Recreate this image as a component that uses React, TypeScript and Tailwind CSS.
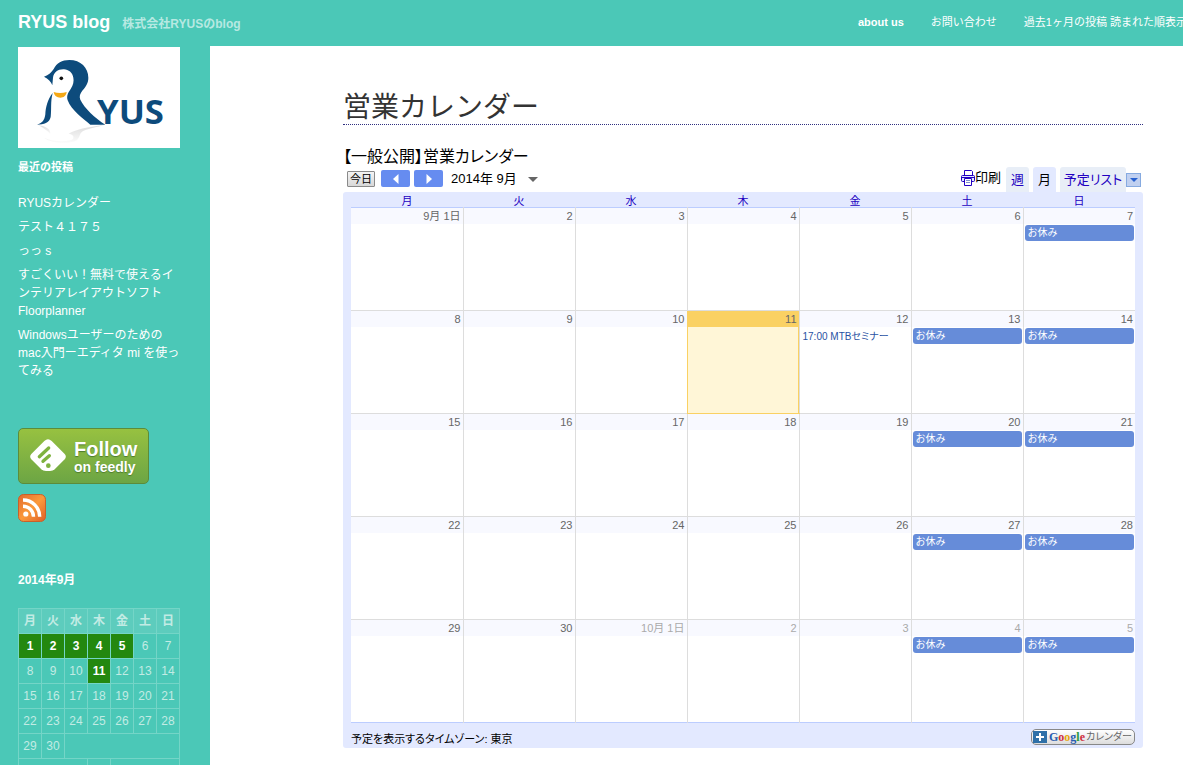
import clsx from 'clsx'

const navLinks = [
  { label: 'about us', bold: true },
  { label: 'お問い合わせ', bold: false },
  { label: '過去1ヶ月の投稿 読まれた順表示', bold: false },
]

const recentPosts = [
  'RYUSカレンダー',
  'テスト４１７５',
  'っっ s',
  'すごくいい！無料で使えるインテリアレイアウトソフト Floorplanner',
  'Windowsユーザーのための mac入門ーエディタ mi を使ってみる',
]

const weekdays = ['月', '火', '水', '木', '金', '土', '日']

const miniWeeks = [
  [1, 2, 3, 4, 5, 6, 7],
  [8, 9, 10, 11, 12, 13, 14],
  [15, 16, 17, 18, 19, 20, 21],
  [22, 23, 24, 25, 26, 27, 28],
]
const postedDays = [1, 2, 3, 4, 5, 11]

type Day = { label: string; holiday?: boolean; today?: boolean; other?: boolean; time?: string; title?: string }

const weeks: Day[][] = [
  [
    { label: '9月 1日' },
    { label: '2' },
    { label: '3' },
    { label: '4' },
    { label: '5' },
    { label: '6' },
    { label: '7', holiday: true },
  ],
  [
    { label: '8' },
    { label: '9' },
    { label: '10' },
    { label: '11', today: true },
    { label: '12', time: '17:00', title: 'MTBセミナー' },
    { label: '13', holiday: true },
    { label: '14', holiday: true },
  ],
  [
    { label: '15' },
    { label: '16' },
    { label: '17' },
    { label: '18' },
    { label: '19' },
    { label: '20', holiday: true },
    { label: '21', holiday: true },
  ],
  [
    { label: '22' },
    { label: '23' },
    { label: '24' },
    { label: '25' },
    { label: '26' },
    { label: '27', holiday: true },
    { label: '28', holiday: true },
  ],
  [
    { label: '29' },
    { label: '30' },
    { label: '10月 1日', other: true },
    { label: '2', other: true },
    { label: '3', other: true },
    { label: '4', other: true, holiday: true },
    { label: '5', other: true, holiday: true },
  ],
]

const Logo = () => (
  <svg viewBox="0 0 486 303" className="block w-full bg-white" role="img" aria-label="RYUS">
    <defs>
      <linearGradient id="shade" x1="0" y1="0" x2="0" y2="1">
        <stop offset="0" stopColor="#dcdcdc" />
        <stop offset="1" stopColor="#fcfcfc" />
      </linearGradient>
    </defs>
    <path d="M62 235C84 238 98 246 97 262C90 252 78 244 62 235Z" fill="url(#shade)" />
    <path d="M258 234C210 240 170 248 152 260C170 262 170 276 158 280C130 286 100 282 78 272C105 294 165 290 178 278C188 266 184 258 196 252C212 244 240 240 258 234Z" fill="url(#shade)" />
    <path d="M104 138C88 158 83 182 82 202C80 220 72 229 57 233C78 233 94 228 98 210C101 188 97 164 104 138Z" fill="#0d4b7c" />
    <path
      d="M78 89C92 84 101 76 107 66C116 48 132 39 154 39C188 39 211 62 211 92C211 108 204 118 194 130C186 140 183 148 187 158C198 182 232 214 262 233H217C196 216 160 190 149 160C145 146 150 138 158 126C166 114 168 102 166 92C163 76 152 68 138 67C120 66 107 76 105 92L103 115C99 103 91 96 78 89Z"
      fill="#0d4b7c"
    />
    <path d="M107 135C118 139 134 139 146 135C144 147 137 152 127 152C117 152 109 146 107 135Z" fill="#f5a815" />
    <circle cx="130" cy="94" r="5.5" fill="#111" />
    <text x="237" y="232" fontSize="104" fontWeight="700" fill="#0d4b7c" className="font-['Open_Sans',sans-serif]">
      YUS
    </text>
  </svg>
)

const FeedlyMark = () => (
  <svg viewBox="0 0 108 100" className="ml-[11px] mr-2 w-9 shrink-0" aria-hidden="true">
    <path d="M43 6Q54-4 65 6L104 45Q111 53 104 61L74 91Q69 96 60 96H48Q39 96 34 91L4 61Q-3 53 4 45Z" fill="#fff" />
    <path d="M28 53L56 27M39 67L58 50" stroke="#7fb23f" strokeWidth="10" strokeLinecap="round" />
    <circle cx="55" cy="80" r="7" fill="#7fb23f" />
  </svg>
)

const RssIcon = () => (
  <svg viewBox="0 0 28 28" className="block size-7" aria-hidden="true">
    <defs>
      <linearGradient id="rss" x1="0" y1="0" x2="1" y2="1">
        <stop offset="0" stopColor="#e0692f" />
        <stop offset="0.5" stopColor="#fb9a3c" />
        <stop offset="1" stopColor="#dd5f28" />
      </linearGradient>
    </defs>
    <rect x="0.5" y="0.5" width="27" height="27" rx="5" fill="url(#rss)" stroke="#c9602a" />
    <circle cx="7.8" cy="20" r="2.6" fill="#fff" />
    <path d="M5 12.2A10.5 10.5 0 0 1 15.5 22.7M5 6A16.7 16.7 0 0 1 21.7 22.7" fill="none" stroke="#fff" strokeWidth="3.4" />
  </svg>
)

const PrinterIcon = () => (
  <svg viewBox="0 0 14 16" className="h-4 w-3.5" fill="none" stroke="#2200c1" aria-hidden="true">
    <path d="M3.5 5V0.5H10.5L11.5 1.5V5" fill="#fff" />
    <rect x="0.5" y="5.5" width="13" height="6" rx="1" fill="#e3e9ff" />
    <path d="M1 7.5H13" />
    <path d="M3.5 8.5H10.5V15.5H3.5Z" fill="#fff" />
    <path d="M5 10.5H9M5 12.5H9" stroke="#7f8fd0" />
  </svg>
)

const Sidebar = () => (
  <aside className="w-[210px] shrink-0 px-[18px] pt-px text-xs leading-[18px]">
    <a href="#home" className="block w-[162px]">
      <Logo />
    </a>

    <h2 className="mt-2.5 text-[11px] font-bold leading-[18px] text-white">最近の投稿</h2>
    <ul className="mt-[18px] w-[162px] space-y-1.5">
      {recentPosts.map((post) => (
        <li key={post}>
          <a href="#post" className="block text-white">
            {post}
          </a>
        </li>
      ))}
    </ul>

    <a
      href="#feedly"
      className="mt-12 flex h-14 w-[131px] items-center rounded-[5px] border border-[#5c8c3a] bg-linear-to-b from-[#97c140] to-[#6ca544] font-bold text-white [text-shadow:0_1px_1px_#4d7c2c]"
    >
      <FeedlyMark />
      <span className="whitespace-nowrap pt-px">
        <span className="block text-xl leading-5">Follow</span>
        <span className="block text-sm leading-4">on feedly</span>
      </span>
    </a>
    <a href="#rss" aria-label="RSS" className="mt-2.5 block w-7">
      <RssIcon />
    </a>

    <table className="mt-[49px] w-[162px] table-fixed border-collapse text-center text-[#c2ebe4]">
      <caption className="pb-[19px] text-left font-bold text-white">2014年9月</caption>
      <thead>
        <tr className="h-[25px] bg-[#5dccbd]">
          {weekdays.map((day) => (
            <th key={day} className="border border-[#74d5c7] p-0 font-bold">
              {day}
            </th>
          ))}
        </tr>
      </thead>
      <tbody>
        {miniWeeks.map((week) => (
          <tr key={week[0]} className="h-[25px]">
            {week.map((day) => {
              const posted = postedDays.includes(day)
              return (
                <td key={day} className={clsx('border border-[#74d5c7] p-0', posted && 'bg-[#23880f] font-bold text-white')}>
                  {posted ? <a href="#day">{day}</a> : day}
                </td>
              )
            })}
          </tr>
        ))}
        <tr className="h-[25px]">
          <td className="border border-[#74d5c7] p-0">29</td>
          <td className="border border-[#74d5c7] p-0">30</td>
          <td colSpan={5} className="border border-[#74d5c7] p-0" />
        </tr>
      </tbody>
      <tfoot>
        <tr className="h-[25px]">
          <td colSpan={3} className="border border-[#74d5c7] p-0" />
          <td className="border border-[#74d5c7] p-0" />
          <td colSpan={3} className="border border-[#74d5c7] p-0" />
        </tr>
      </tfoot>
    </table>
  </aside>
)

const Toolbar = () => (
  <div className="flex h-[25px] items-start pl-1 pr-0.5">
    <button
      type="button"
      className="mt-1 h-4 w-7 rounded-[1px] border border-[#8a8a8a] bg-linear-to-b from-[#f4f4f4] to-[#d8d8d8] text-[11px] leading-3 text-black"
    >
      今日
    </button>
    <button type="button" aria-label="前の月" className="ml-1.5 mt-[3px] flex h-[17px] w-[29px] items-center justify-center rounded-[2px] bg-[#668cf0]">
      <svg viewBox="0 0 6 10" className="h-2.5 w-1.5" aria-hidden="true">
        <path d="M5.5 0V10L0 5Z" fill="#fff" />
      </svg>
    </button>
    <button type="button" aria-label="次の月" className="ml-1 mt-[3px] flex h-[17px] w-[29px] items-center justify-center rounded-[2px] bg-[#668cf0]">
      <svg viewBox="0 0 6 10" className="h-2.5 w-1.5" aria-hidden="true">
        <path d="M0.5 0V10L6 5Z" fill="#fff" />
      </svg>
    </button>
    <button type="button" className="ml-2 mt-[3px] flex items-center text-[13px] leading-[18px] text-black">
      2014年 9月
      <svg viewBox="0 0 10 5" className="ml-[11px] h-[5px] w-2.5" aria-hidden="true">
        <path d="M0 0H10L5 5Z" fill="#666" />
      </svg>
    </button>

    <div className="ml-auto flex items-end text-[13px] leading-[18px]">
      <a href="#print" className="mr-[5px] flex items-center pb-[5px] text-black">
        <PrinterIcon />
        印刷
      </a>
      <a href="#week" className="mr-1 h-[25px] w-[23px] rounded-t-[3px] bg-[#e8eef7] pt-1 text-center text-[#2200c1]">
        週
      </a>
      <a href="#month" className="mr-1 h-[25px] w-[23px] rounded-t-[3px] bg-[#e3e9ff] pt-1 text-center text-black">
        月
      </a>
      <a href="#agenda" className="h-[25px] w-[66px] rounded-t-[3px] bg-[#e8eef7] pt-1 text-center text-[#2200c1] [font-feature-settings:'palt']">
        予定リスト
      </a>
      <button type="button" aria-label="カレンダー一覧" className="mb-[5px] flex h-3.5 w-[15px] items-center justify-center border border-[#86aae0] bg-[#c0d0f0]">
        <svg viewBox="0 0 8 4" className="h-1 w-2" aria-hidden="true">
          <path d="M0 0H8L4 4Z" fill="#2760cf" />
        </svg>
      </button>
    </div>
  </div>
)

const DayCell = ({ day }: { day: Day }) => (
  <td
    className={clsx(
      'p-0 align-top not-first:border-l not-first:border-l-[#ddd]',
      day.today && 'border-b border-b-[#fad163] bg-[#fff6d7] outline outline-[#fad163] -outline-offset-1',
    )}
  >
    <div
      className={clsx(
        'h-4 pr-0.5 text-right text-[11px] leading-4',
        day.today ? 'bg-[#fad163]' : 'bg-[#f8f9ff]',
        day.other ? 'text-[#aaa]' : 'text-[#666]',
      )}
    >
      {day.label}
    </div>
    {day.holiday && (
      <a href="#event" className="mx-px mt-px block h-4 rounded-[3px] bg-[#668cd9] pl-[3px] text-[10px] leading-4 text-white">
        お休み
      </a>
    )}
    {day.title && (
      <a href="#event" className="mt-px block whitespace-nowrap pl-[3px] text-[10px] leading-[18px] text-[#2952a3]">
        {day.time} <span className="[font-feature-settings:'palt']">{day.title}</span>
      </a>
    )}
  </td>
)

const Calendar = () => (
  <section className="mt-[21px] text-black">
    <h2 className="pt-px text-base leading-5 [font-feature-settings:'palt']">【一般公開】営業カレンダー</h2>
    <Toolbar />
    <div className="rounded-[3px] bg-[#e3e9ff] px-2">
      <table className="w-full table-fixed border-collapse">
        <thead>
          <tr className="h-[15px] border-b border-[#bccdff]">
            {weekdays.map((day) => (
              <th key={day} className="p-0 pt-1 text-[11px] font-normal leading-[11px] text-[#2200c1]">
                {day}
              </th>
            ))}
          </tr>
        </thead>
        <tbody className="bg-white">
          {weeks.map((week) => (
            <tr key={week[0].label} className="h-[103px] border-b border-[#ddd] last:border-[#bccdff]">
              {week.map((day) => (
                <DayCell key={day.label} day={day} />
              ))}
            </tr>
          ))}
        </tbody>
      </table>
      <div className="flex h-[25px] items-center justify-between">
        <p className="pt-1.5 text-[11px] leading-4 [font-feature-settings:'palt']">予定を表示するタイムゾーン: 東京</p>
        <a
          href="#google"
          className="mt-0.5 flex h-4 w-[104px] items-center rounded-[5px] border border-[#888] bg-linear-to-b from-white to-[#ddd] pl-px"
        >
          <svg viewBox="0 0 14 12" className="h-3 w-3.5 shrink-0" aria-hidden="true">
            <rect width="14" height="12" fill="#2f70a8" />
            <path d="M7 2V10M3 6H11" stroke="#fff" strokeWidth="2" />
          </svg>
          <span className="ml-0.5 font-['Liberation_Serif',serif] text-xs font-bold leading-[14px]">
            <span className="text-[#2a5db0]">G</span>
            <span className="text-[#d0303f]">o</span>
            <span className="text-[#e5a50a]">o</span>
            <span className="text-[#2a5db0]">g</span>
            <span className="text-[#2f9a3f]">l</span>
            <span className="text-[#d0303f]">e</span>
          </span>
          <span className="ml-px whitespace-nowrap text-[10px] leading-[14px] text-[#666] [font-feature-settings:'palt']">カレンダー</span>
        </a>
      </div>
    </div>
  </section>
)

export default function App() {
  return (
    <div className="flex min-h-screen flex-col overflow-hidden bg-[#4bc8b7] font-['Liberation_Sans','Noto_Sans_CJK_JP',sans-serif]">
      <header className="flex h-[46px] items-center pb-0.5 pl-[18px]">
        <h1 className="shrink-0 text-lg font-bold leading-6 text-white">
          <a href="#home">RYUS blog</a>
        </h1>
        <p className="ml-3 shrink-0 pt-1 text-xs font-bold text-[#b7e9e2]">株式会社RYUSのblog</p>
        <nav className="-mr-1 ml-auto flex shrink-0 gap-[27px] whitespace-nowrap text-[11px] leading-4 text-white">
          {navLinks.map((link) => (
            <a key={link.label} href="#page" className={clsx(link.bold && 'font-bold')}>
              {link.label}
            </a>
          ))}
        </nav>
      </header>

      <div className="flex flex-1">
        <Sidebar />
        <main className="min-w-0 flex-1 bg-white px-10">
          <div className="ml-auto max-w-[800px] pt-[46px]">
            <h1 className="border-b border-dotted border-[#303080] text-[28px] leading-8 text-[#333]">営業カレンダー</h1>
            <Calendar />
          </div>
        </main>
      </div>
    </div>
  )
}
